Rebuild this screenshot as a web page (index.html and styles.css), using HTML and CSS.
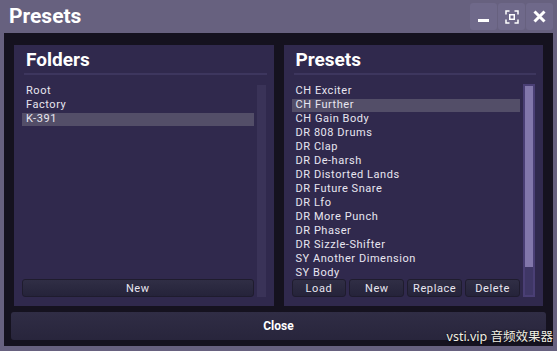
FILE: index.html
```html
<!DOCTYPE html>
<html lang="en">

<head>
  <meta charset="UTF-8">
  <meta name="viewport" content="width=device-width, initial-scale=1.0">
  <title>Presets</title>

  <link rel="stylesheet" href="styles.css">
</head>

<body>
  <div class="window">
    <div class="titlebar">
      <h1 class="title">Presets</h1>
      <div class="winbtns">
        <button class="winbtn" title="Minimize">
          <svg width="13" height="13" viewBox="0 0 13 13"><rect x="1" y="9" width="11" height="3" fill="#fff" /></svg>
        </button>
        <button class="winbtn" title="Fullscreen">
          <svg width="14" height="14" viewBox="0 0 14 14" fill="none" stroke="#fff" stroke-width="1.5">
            <path d="M1 4.5V1h3.5M9.5 1H13v3.5M13 9.5V13H9.5M4.5 13H1V9.5" />
            <rect x="4.75" y="4.75" width="4.5" height="4.5" />
          </svg>
        </button>
        <button class="winbtn" title="Close">
          <svg width="13" height="13" viewBox="0 0 13 13"><path d="M1.5 1.5l10 10M11.5 1.5l-10 10" stroke="#fff" stroke-width="3" /></svg>
        </button>
      </div>
    </div>

    <div class="frame">
      <div class="panels">
        <div class="panel">
          <h2 class="panel-title">Folders</h2>
          <div class="panel-body">
            <div class="column">
              <ul class="list">
                <li>Root</li>
                <li>Factory</li>
                <li class="selected">K-391</li>
              </ul>
              <div class="buttons">
                <button class="btn">New</button>
              </div>
            </div>
            <div class="scrollbar"></div>
          </div>
        </div>

        <div class="panel">
          <h2 class="panel-title">Presets</h2>
          <div class="panel-body">
            <div class="column">
              <ul class="list">
                <li>CH Exciter</li>
                <li class="selected">CH Further</li>
                <li>CH Gain Body</li>
                <li>DR 808 Drums</li>
                <li>DR Clap</li>
                <li>DR De-harsh</li>
                <li>DR Distorted Lands</li>
                <li>DR Future Snare</li>
                <li>DR Lfo</li>
                <li>DR More Punch</li>
                <li>DR Phaser</li>
                <li>DR Sizzle-Shifter</li>
                <li>SY Another Dimension</li>
                <li>SY Body</li>
              </ul>
              <div class="buttons">
                <button class="btn">Load</button>
                <button class="btn">New</button>
                <button class="btn">Replace</button>
                <button class="btn">Delete</button>
              </div>
            </div>
            <div class="scrollbar active">
              <div class="thumb"></div>
            </div>
          </div>
        </div>
      </div>

      <button class="close-btn">Close</button>
    </div>

    <div class="watermark">vsti.vip 音频效果器</div>
  </div>
</body>

</html>
```

FILE: styles.css
```css
* {
  padding: 0;
  margin: 0;
  box-sizing: border-box;
}

body {
  background: #67617f;
  font-family: Roboto, "Noto Sans", sans-serif;
  color: #e8e6f0;
}

.window {
  position: relative;
  width: 557px;
  height: 351px;
  overflow: hidden;
}

.titlebar {
  height: 33px;
  display: flex;
  align-items: flex-start;
  justify-content: space-between;
  padding: 3px 4px 0 9px;
}

.title {
  font-size: 21px;
  font-weight: bold;
  line-height: 26px;
  color: #fff;
}

.winbtns {
  display: flex;
  gap: 1px;
}

.winbtn {
  width: 27px;
  height: 27px;
  border: none;
  border-radius: 3px;
  background: #6f698a;
  display: flex;
  align-items: center;
  justify-content: center;
}

.frame {
  height: 313px;
  margin: 0 4px;
  background: #15121f;
  padding: 12px 7px 0 7px;
}

.panels {
  display: flex;
  gap: 10px;
  padding: 0 3px;
}

.panel {
  flex: 1;
  height: 261px;
  background: #30294d;
  display: flex;
  flex-direction: column;
  padding: 0 8px 9px 8px;
}

.panel-title {
  font-size: 19px;
  font-weight: bold;
  line-height: 24px;
  color: #fff;
  padding: 3px 2px 0;
  margin: 0 -1px 9px 2px;
  height: 30px;
  border-bottom: 2px solid #3d365e;
}

.panel-body {
  flex: 1;
  display: flex;
  gap: 3px;
  min-height: 0;
}

.column {
  flex: 1;
  display: flex;
  flex-direction: column;
  min-width: 0;
}

.list {
  list-style: none;
  flex: 1;
  overflow: hidden;
  font-size: 11px;
  letter-spacing: 0.55px;
  line-height: 14px;
}

.list li {
  padding-left: 4px;
  height: 14px;
  white-space: nowrap;
}

.list li.selected {
  background: #534e68;
  box-shadow: inset 0 1px 0 #30294d;
}

.buttons {
  display: flex;
  gap: 3px;
  height: 18px;
  margin-top: 1px;
}

.btn {
  flex: 1;
  border: 1px solid #1f1c2e;
  border-radius: 3px;
  background: linear-gradient(#302e45, #25233a);
  color: #e8e6f0;
  font-family: Roboto, "Noto Sans", sans-serif;
  font-size: 11px;
  letter-spacing: 0.6px;
}

.scrollbar {
  width: 9px;
  background: #3a3358;
  margin-top: 1px;
}

.scrollbar.active {
  width: 12px;
  background: #3f3766;
  border: 2px solid #4a3f75;
  margin-top: 0;
}

.thumb {
  height: 181px;
  background: #8277ab;
}

.close-btn {
  display: block;
  width: 100%;
  height: 28px;
  margin-top: 6px;
  border: none;
  border-radius: 3px;
  background: linear-gradient(#302d45, #28253c);
  color: #fff;
  font-family: Roboto, "Noto Sans", sans-serif;
  font-size: 12px;
  font-weight: bold;
}

.watermark {
  position: absolute;
  right: 4px;
  bottom: 6px;
  font-family: "Noto Sans", "Noto Sans CJK SC", sans-serif;
  font-size: 12.5px;
  color: #f2f0e4;
  text-shadow: 0 0 2px #000;
}
```
